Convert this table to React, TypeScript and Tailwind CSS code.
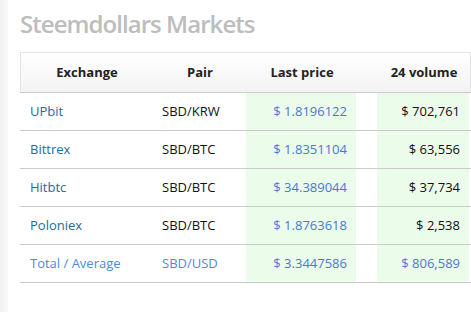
import React from 'react'

const rows = [
  { ex: 'UPbit', pair: 'SBD/KRW', price: '$ 1.8196122', vol: '$ 702,761' },
  { ex: 'Bittrex', pair: 'SBD/BTC', price: '$ 1.8351104', vol: '$ 63,556' },
  { ex: 'Hitbtc', pair: 'SBD/BTC', price: '$ 34.389044', vol: '$ 37,734' },
  { ex: 'Poloniex', pair: 'SBD/BTC', price: '$ 1.8763618', vol: '$ 2,538' },
]

const cols = 'grid grid-cols-[132px_94px_110px_21px_92px]'

export default function App() {
  return (
    <div className="flex h-[312px] w-[471px] overflow-hidden bg-white font-['Open_Sans',sans-serif]">
      <div className="w-[8px] shrink-0 bg-gradient-to-r from-[#f1f1f1] to-[#f8f8f8]" />
      <div className="flex flex-col pl-[12px] pt-[8px]">
        <h1 className="h-[44px] text-[24px] font-semibold leading-[32px] tracking-[-0.95px] text-[#bdbdbd]">
          Steemdollars Markets
        </h1>

        {/* header */}
        <div className={`${cols} h-[40px] border border-b-0 border-[#e4e4e4] bg-gradient-to-b from-white to-[#f3f3f3] text-[13px] font-bold text-[#222]`}>
          <div className="flex items-center justify-center">Exchange</div>
          <div className="flex items-center justify-center">Pair</div>
          <div className="flex items-center justify-center">Last price</div>
          <div />
          <div className="flex items-center justify-center">24 volume</div>
        </div>

        {rows.map((r) => (
          <div key={r.ex} className={`${cols} h-[38px] border-t border-[#cbcbcb] text-[13px]`}>
            <div className="flex items-center pl-[10px] text-[#1d6aa5]">{r.ex}</div>
            <div className="flex items-center pl-[10px] text-[#111]">{r.pair}</div>
            <div className="flex items-center justify-end bg-[#ecfcea] pr-[9px] text-[#4a78d6]">{r.price}</div>
            <div />
            <div className="flex items-center justify-end bg-[#ecfcea] pr-[9px] text-[#111]">{r.vol}</div>
          </div>
        ))}

        <div className={`${cols} h-[39px] border-y border-[#cbcbcb] text-[13px] text-[#4a8be0]`}>
          <div className="flex items-center pl-[10px]">Total / Average</div>
          <div className="flex items-center pl-[10px]">SBD/USD</div>
          <div className="flex items-center justify-end bg-[#ecfcea] pr-[9px] text-[#4a78d6]">$ 3.3447586</div>
          <div />
          <div className="flex items-center justify-end bg-[#ecfcea] pr-[9px] text-[#4a78d6]">$ 806,589</div>
        </div>
      </div>
    </div>
  )
}
